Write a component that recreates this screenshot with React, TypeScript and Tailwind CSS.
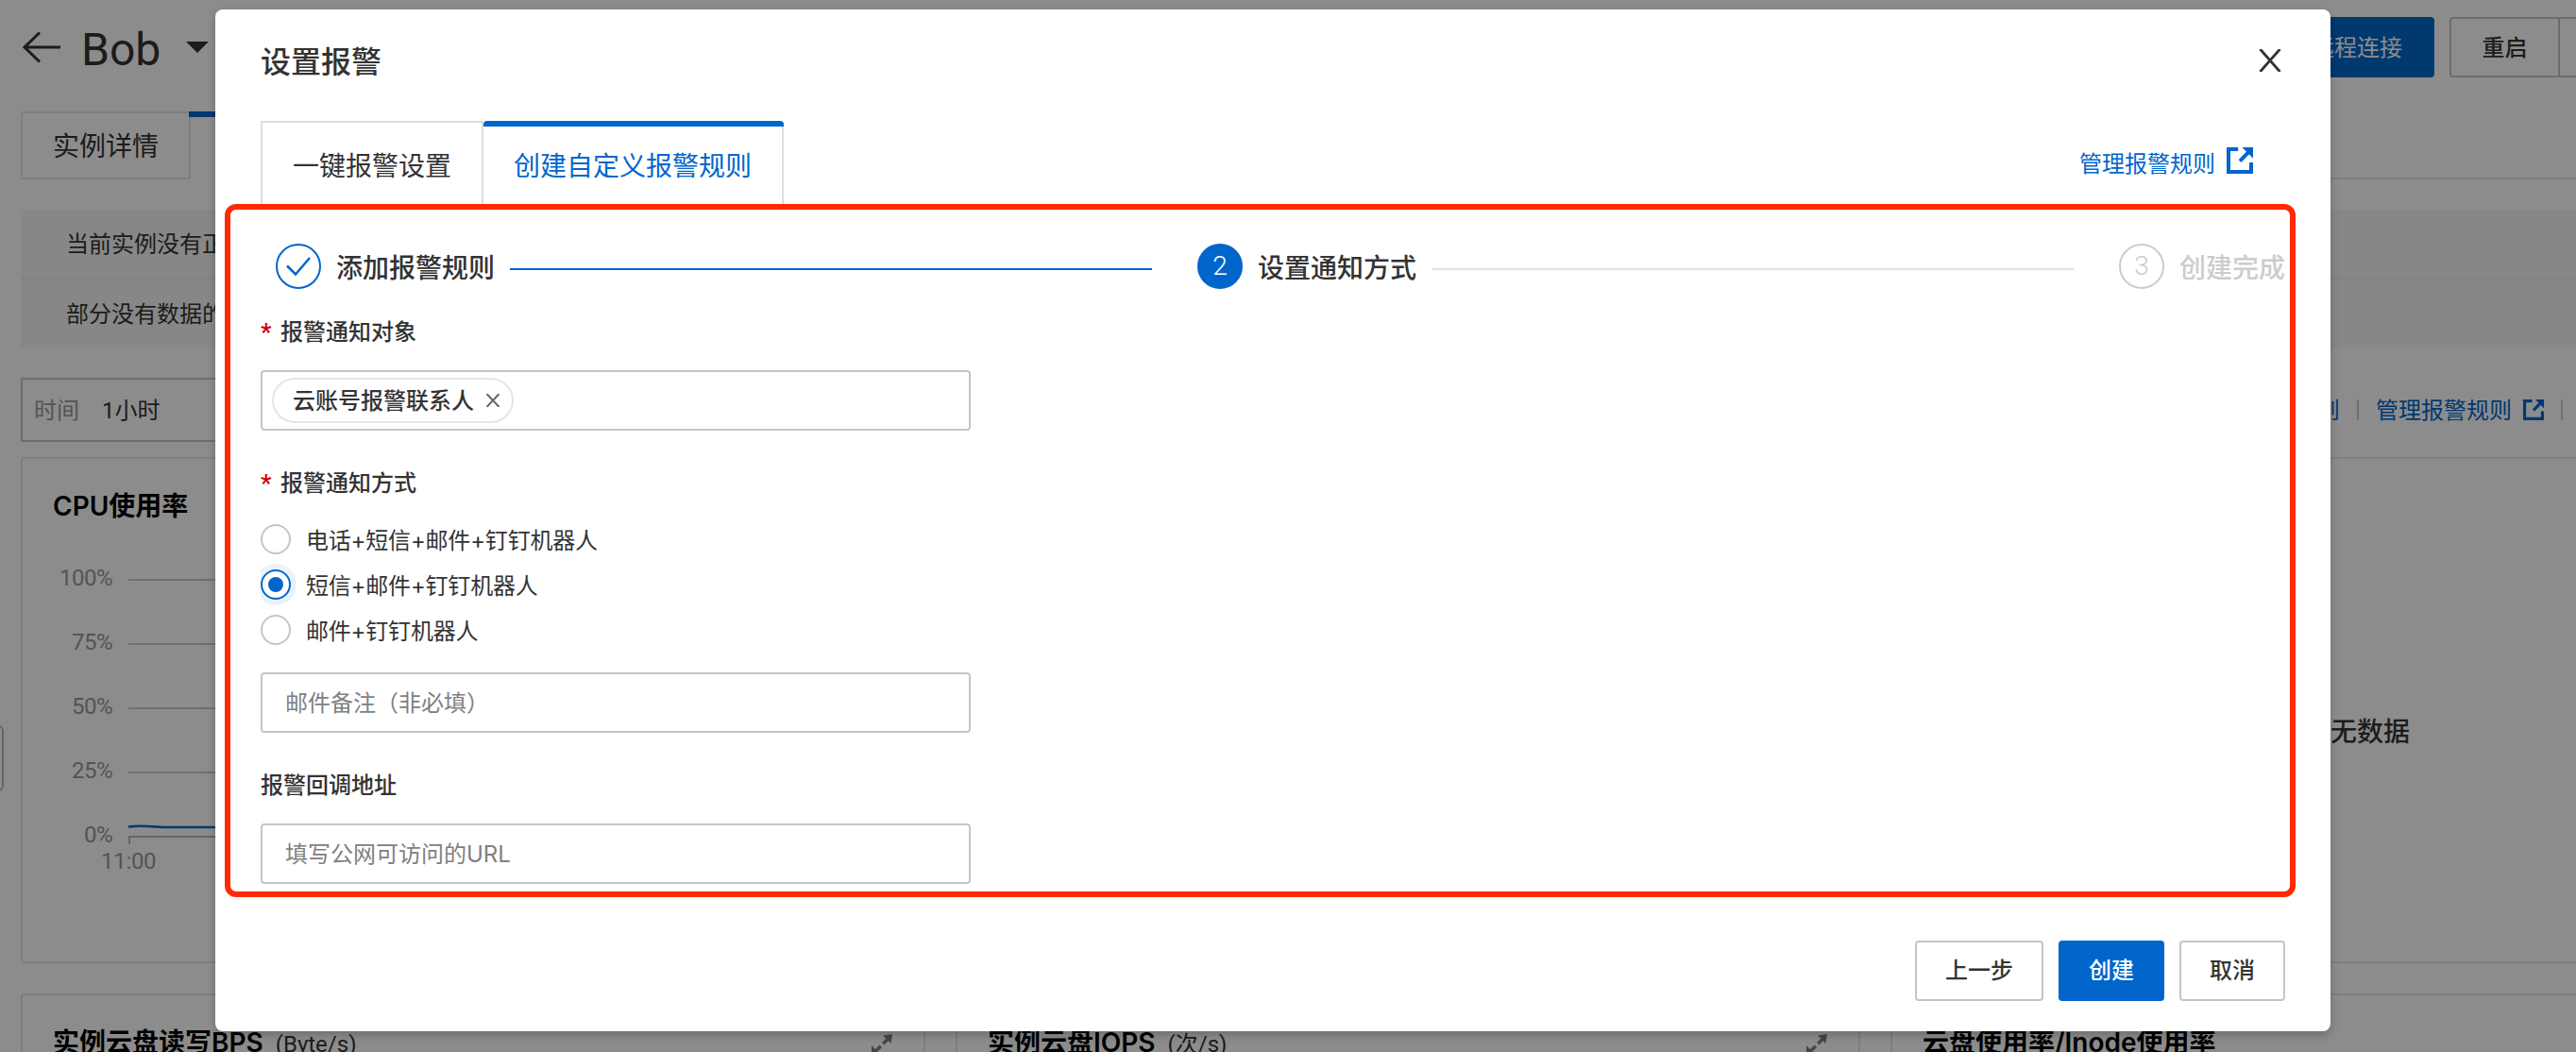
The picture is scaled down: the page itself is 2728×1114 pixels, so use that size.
import { useState } from 'react';
import clsx from 'clsx';

const metricCards = [
  { title: '实例云盘读写BPS', unit: '(Byte/s)' },
  { title: '实例云盘IOPS', unit: '(次/s)' },
  { title: '云盘使用率/Inode使用率', unit: '' },
];

const cpuTicks = ['100%', '75%', '50%', '25%', '0%'];

const steps = ['添加报警规则', '设置通知方式', '创建完成'];

const notifyOptions = ['电话+短信+邮件+钉钉机器人', '短信+邮件+钉钉机器人', '邮件+钉钉机器人'];

const latinTitle = "font-['Inter','Noto_Sans_CJK_SC',sans-serif]";

function ExternalIcon({ className }: { className?: string }) {
  return (
    <svg viewBox="0 0 28 28" className={className} fill="none">
      <path d="M12.2 2H2v24h24V16" stroke="currentColor" strokeWidth="4" />
      <path d="M14 14.6 24 4.4" stroke="currentColor" strokeWidth="4" />
      <path d="M16.4 0H28v11.8z" fill="currentColor" />
    </svg>
  );
}

function ExpandIcon() {
  return (
    <svg viewBox="0 0 24 24" className="h-6 w-6 text-[#808080]">
      <path d="M13.2 11.2 20 4.5M10.8 13.8 4 20.5" stroke="currentColor" strokeWidth="3.5" />
      <path d="M13 2.500 23 1l-1.500 10zM1 13v10h10z" fill="currentColor" />
    </svg>
  );
}

function PageHeader() {
  return (
    <header className="flex h-[100px] items-center pl-6">
      <svg viewBox="0 0 40 34" className="h-[34px] w-10 text-[#333]" fill="none">
        <path d="M40 17H2M18 1.5 2 17l16 15.5" stroke="currentColor" strokeWidth="3" />
      </svg>
      <h1 className="ml-[22px] pt-1.5 text-[48px] leading-none text-[#333]">Bob</h1>
      <svg viewBox="0 0 24 12" className="ml-[27px] h-3 w-6 text-[#333]">
        <path d="M0 0h24L12 12z" fill="currentColor" />
      </svg>
      <div className="ml-auto flex h-16">
        <button className="mr-4 rounded-sm bg-[#06c] px-[34px] pt-px text-2xl text-white">远程连接</button>
        <button className="w-[117px] rounded-l-sm border-2 border-[#c0c6cc] pt-px text-2xl font-medium text-[#333]">
          重启
        </button>
        <span className="w-[17px] border-y-2 border-[#c0c6cc]" />
      </div>
    </header>
  );
}

function CpuChart() {
  return (
    <div className="relative mt-6 flex flex-col">
      {cpuTicks.map((tick) => (
        <div key={tick} className="flex h-[68px] items-center gap-[17px]">
          <span className="w-[95px] text-right text-2xl tracking-[-0.5px] text-[#999]">{tick}</span>
          <span className={clsx('mt-1 h-0.5 flex-1', tick === '0%' ? 'bg-[#bbb]' : 'bg-[#ccc]')} />
        </div>
      ))}
      <svg viewBox="0 0 120 28" className="absolute top-[291px] left-[110px] h-7 w-[120px]" fill="none">
        <path d="M2 6.5c12-2 20-.8 36 .5H120" stroke="#06c" strokeWidth="2.5" />
        <path d="M3 16v9" stroke="#bbb" strokeWidth="2" />
      </svg>
      <span className="-mt-[22px] w-[142px] pl-[83px] text-2xl tracking-[-0.3px] text-[#999]">11:00</span>
    </div>
  );
}

function MonitorPage() {
  return (
    <div className="h-[1114px] overflow-hidden bg-white">
      <PageHeader />
      <div className="mt-[18px] flex h-[72px] pl-[22px]">
        <div className="flex w-[180px] items-center justify-center border-2 border-[#e5e5e5] pt-[3px] text-[28px] text-[#333]">
          实例详情
        </div>
        <div className="-ml-0.5 w-[160px] border-t-6 border-[#06c]" />
        <div className="flex-1 border-b-2 border-[#e5e5e5]" />
      </div>

      <div className="mt-8 ml-[22px] bg-[#f6f6f6] text-2xl text-[#333]">
        <p className="flex h-[74px] items-center border-b-2 border-[#ebebeb] pt-[2px] pl-12">当前实例没有正</p>
        <p className="flex h-[72px] items-center pt-[2px] pl-12">部分没有数据的</p>
      </div>

      <div className="mt-8 flex h-[68px] items-center pl-[22px] text-2xl">
        <div className="flex h-full w-[700px] items-center gap-6 border-2 border-[#c8c8c8] pt-0.5 pl-3">
          <span className="text-[#999]">时间</span>
          <span className="text-[#333]">1小时</span>
        </div>
        <div className="mr-3.5 ml-auto flex items-center text-[#06c]">
          <span className="pt-0.5">创建报警规则</span>
          <span className="mx-[18px] h-[22px] w-0.5 bg-[#ccc]" />
          <span className="pt-0.5">管理报警规则</span>
          <ExternalIcon className="ml-3 h-[22px] w-[22px]" />
          <span className="ml-[18px] h-[22px] w-0.5 bg-[#ccc]" />
        </div>
      </div>

      <div className="mt-4 ml-[22px] grid w-[2938px] grid-cols-3 gap-8">
        <section className="h-[536px] rounded-sm border-2 border-[#e5e5e5]">
          <h2 className={clsx('mt-8 pl-8 text-[28px] leading-9 font-semibold text-black', latinTitle)}>CPU使用率</h2>
          <CpuChart />
        </section>
        <section className="h-[536px] rounded-sm border-2 border-[#e5e5e5]" />
        <section className="flex h-[536px] items-center rounded-sm border-2 border-[#e5e5e5] pt-[47px] pl-[436px] text-[28px] font-medium text-[#333]">
          暂无数据
        </section>
        {metricCards.map((card) => (
          <section key={card.title} className="flex h-[536px] items-start rounded-sm border-2 border-[#e5e5e5] px-8 pt-8">
            <h2 className={clsx('text-[28px] leading-9 font-semibold text-black', latinTitle)}>{card.title}</h2>
            <span className="mt-0.5 ml-[13px] text-2xl leading-9 text-[#333]">{card.unit}</span>
            <span className="ml-auto pt-2">
              <ExpandIcon />
            </span>
          </section>
        ))}
      </div>
    </div>
  );
}

function StepBar({ current }: { current: number }) {
  return (
    <ol className="mt-[42px] flex h-12 items-center pl-4">
      {steps.map((label, i) => (
        <li key={label} className="flex items-center">
          <span
            className={clsx(
              'flex h-12 w-12 items-center justify-center rounded-full border-2 text-[28px] font-light',
              i < current && 'border-[#06c] text-[#06c]',
              i === current && 'border-[#06c] bg-[#06c] text-white',
              i > current && 'border-[#ccc] text-[#ccc]',
            )}
          >
            {i < current ? (
              <svg viewBox="0 0 26 20" className="h-5 w-[26px]" fill="none">
                <path d="M1 9.5 10 18.5 25 1" stroke="currentColor" strokeWidth="2.5" />
              </svg>
            ) : (
              i + 1
            )}
          </span>
          <span
            className={clsx(
              'mt-[5px] -mb-px ml-4 text-[28px] leading-10 font-medium whitespace-nowrap',
              i > current ? 'text-[#ccc]' : 'text-[#333]',
            )}
          >
            {label}
          </span>
          {i < steps.length - 1 && (
            <span className={clsx('mt-1.5 mr-12 ml-4 h-0.5 w-[680px]', i < current ? 'bg-[#06c]' : 'bg-[#e0e0e0]')} />
          )}
        </li>
      ))}
    </ol>
  );
}

function FieldLabel({ children, required }: { children: string; required?: boolean }) {
  return (
    <div className="flex h-8 items-center text-2xl font-medium text-[#333]">
      {required && <span className="w-[21px] text-[26px] text-[#c00]">*</span>}
      {children}
    </div>
  );
}

const inputClass =
  "block h-16 w-[752px] rounded-sm border-2 border-[#c0c6cf] px-6 font-['Inter','Noto_Sans_CJK_SC',sans-serif] text-2xl text-[#333] placeholder:text-[#808080]";

function AlarmDialog() {
  const [method, setMethod] = useState(1);

  return (
    <div className="relative flex h-[1082px] w-[2240px] flex-col rounded-lg bg-white px-12 shadow-[0_4px_10px_rgba(0,0,0,0.22)]">
      <div className="flex h-[118px] items-start justify-between pt-8">
        <h2 className="pt-px text-[32px] leading-[46px] font-medium text-[#333]">设置报警</h2>
        <svg viewBox="0 0 24 24" className="mt-2.5 mr-1 h-6 w-6 text-[#333]" fill="none">
          <path d="M1.5 0 22.5 24M22.5 0 1.5 24" stroke="currentColor" strokeWidth="2.8" />
        </svg>
      </div>

      <div className="flex h-[88px] text-[28px]">
        <div className="flex w-[236px] items-center justify-center border-2 border-b-0 border-[#ddd] pt-[7px]">
          <span className="text-[#333]">一键报警设置</span>
        </div>
        <div className="flex w-[318px] flex-col rounded-t-sm border-r-2 border-[#ddd]">
          <span className="-mr-0.5 h-1.5 rounded-t-sm bg-[#06c]" />
          <span className="flex flex-1 items-center justify-center pt-[3px] text-[#06c]">创建自定义报警规则</span>
        </div>
        <a className="mr-[34px] ml-auto flex h-[90px] items-center text-2xl text-[#06c]">
          <span className="pt-px">管理报警规则</span>
          <ExternalIcon className="mb-[7px] ml-3 h-7 w-7" />
        </a>
      </div>

      <StepBar current={1} />

      <div className="mt-[30px]">
        <FieldLabel required>报警通知对象</FieldLabel>
        <div className="mt-6 flex h-16 w-[752px] items-center rounded-sm border-2 border-[#c0c6cf] pl-2.5">
          <span className="flex h-12 w-64 items-center rounded-full border-2 border-[#e5e5e5] pl-5 text-2xl font-medium text-[#333]">
            <span className="pt-0.5">云账号报警联系人</span>
            <svg viewBox="0 0 14 14" className="ml-[13px] h-3.5 w-3.5 text-[#666]" fill="none">
              <path d="M.5 0 13.5 14M13.5 0 .5 14" stroke="currentColor" strokeWidth="2" />
            </svg>
          </span>
        </div>
      </div>

      <div className="mt-10">
        <FieldLabel required>报警通知方式</FieldLabel>
        <div className="mt-[19px] overflow-x-clip">
          {notifyOptions.map((option, i) => (
            <label key={option} className="flex h-12 items-center gap-4 text-2xl text-[#333]">
              <input
                type="radio"
                name="method"
                className="sr-only"
                checked={method === i}
                onChange={() => setMethod(i)}
              />
              <span
                className={clsx(
                  'flex h-8 w-8 items-center justify-center rounded-full border-2 bg-white',
                  method === i ? 'border-[#06c] shadow-[0_0_0_6px_#ebf2fb]' : 'border-[#c0c6cf]',
                )}
              >
                {method === i && <span className="h-4 w-4 rounded-full bg-[#06c]" />}
              </span>
              <span className={clsx('pt-[3px] tracking-[-0.2px]', latinTitle)}>{option}</span>
            </label>
          ))}
        </div>
        <input className={clsx(inputClass, 'mt-[21px]')} placeholder="邮件备注（非必填）" />
      </div>

      <div className="mt-10">
        <FieldLabel>报警回调地址</FieldLabel>
        <input className={clsx(inputClass, 'mt-6')} placeholder="填写公网可访问的URL" />
      </div>

      <div className="mt-auto mb-8 flex h-16 justify-end gap-4 text-2xl font-medium">
        <button className="w-[136px] rounded-sm border-2 border-[#c0c6cf] text-[#333]">上一步</button>
        <button className="w-[112px] rounded-sm bg-[#06c] text-white">创建</button>
        <button className="w-[112px] rounded-sm border-2 border-[#c0c6cf] text-[#333]">取消</button>
      </div>

      {/* highlight frame around the form area */}
      <div className="pointer-events-none absolute top-[206px] left-[10px] h-[734px] w-[2193px] rounded-xl border-6 border-[#ff2a00]" />
    </div>
  );
}

export default function App() {
  return (
    <div
      lang="zh-CN"
      className="relative h-[1114px] w-[2728px] overflow-hidden font-['Roboto','Noto_Sans_CJK_SC',sans-serif]"
    >
      <MonitorPage />
      {/* collapsed side panel handle */}
      <div className="absolute top-[768px] left-[-10px] h-[70px] w-[14px] rounded-md border-2 border-[#bbb]" />
      <div className="absolute inset-0 bg-black/45 pt-2.5 pl-[228px]">
        <AlarmDialog />
      </div>
    </div>
  );
}
